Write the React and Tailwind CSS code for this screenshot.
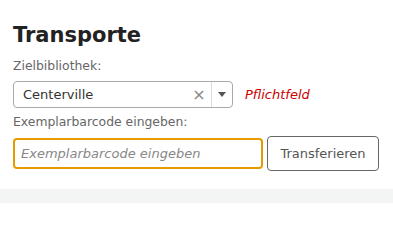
export default function App() {
  return (
    <div className="w-[393px] h-[203px] bg-white flex flex-col font-['DejaVu_Sans',sans-serif]">
      <div className="px-[13px] pt-[23px] flex-1">
        <h1 className="text-[21px] leading-[25px] font-bold text-[#222]">Transporte</h1>
        <div className="mt-[10px] text-[12.4px] leading-[16px] text-[#666]">Zielbibliothek:</div>
        <div className="mt-[7px] flex items-center gap-3">
          <div className="w-[220px] h-[27px] border border-[#aaa] rounded-[4px] flex items-center">
            <span className="flex-1 pl-[9px] text-[13px] text-[#333]">Centerville</span>
            <span className="w-[18px] text-center text-[16px] text-[#888] leading-none">×</span>
            <div className="w-px h-[25px] bg-[#ddd] ml-[3px]" />
            <div className="w-[20px] flex justify-center">
              <svg width="8" height="5" viewBox="0 0 8 5"><path d="M0 0h8L4 5z" fill="#555" /></svg>
            </div>
          </div>
          <span className="text-[13px] italic text-[#cc0000]">Pflichtfeld</span>
        </div>
        <div className="mt-[6px] text-[12.4px] leading-[16px] text-[#666]">Exemplarbarcode eingeben:</div>
        <div className="mt-[6px] flex items-center gap-[4px]">
          <input
            autoFocus
            className="w-[250px] h-[31px] border-2 border-[#e69b00] rounded-[4px] px-[6px] text-[13px] italic text-[#222] caret-black outline-none placeholder:text-[#888]"
            placeholder="Exemplarbarcode eingeben"
          />
          <button className="w-[112px] h-[35px] border border-[#666] rounded-[4px] text-[13px] text-[#555] bg-white">
            Transferieren
          </button>
        </div>
      </div>
      <div className="h-[14px] bg-[#f3f4f4]" />
    </div>
  );
}
